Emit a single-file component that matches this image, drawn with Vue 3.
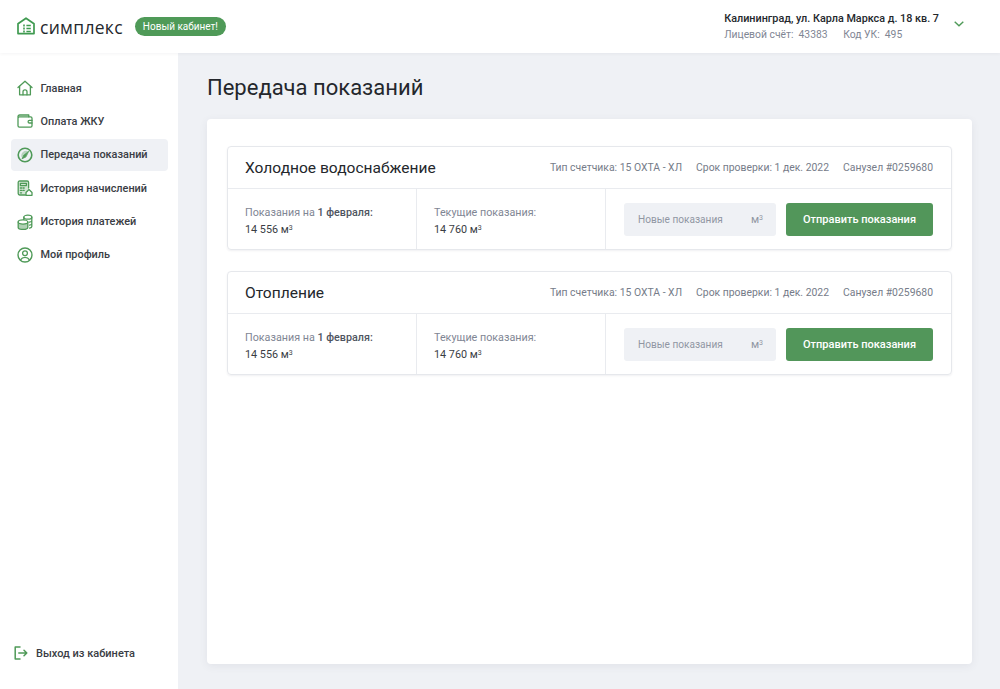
<template>
  <div class="page">
    <header class="topbar">
      <div class="logo">
        <svg class="logo-icon" width="18" height="18" viewBox="0 0 18 18" fill="none" stroke="#3f9a50" stroke-width="1.7">
          <path d="M1 6.8 9 1.2l8 5.6v9.800H1z" stroke-linejoin="round" />
          <path d="M7 7.6v1.8M7 10.600v1.800M7 13.600v1.800" stroke-width="1.6" />
          <path d="M9.4 8.500h4.400M9.4 11.500h4.400M9.4 14.500h4.400" stroke-width="1.6" />
        </svg>
        <span class="logo-text">симплекс</span>
        <span class="badge">Новый кабинет!</span>
      </div>
      <div class="account">
        <div class="account-info">
          <div class="address">Калининград, ул. Карла Маркса д. 18 кв. 7</div>
          <div class="account-meta">
            <span>Лицевой счёт:&nbsp; 43383</span>
            <span>Код УК:&nbsp; 495</span>
          </div>
        </div>
        <svg class="chevron" width="10" height="6" viewBox="0 0 10 6" fill="none" stroke="#4f9a58" stroke-width="1.4">
          <path d="M.7.8 5 4.8 9.3.8" />
        </svg>
      </div>
    </header>

    <div class="body">
      <aside class="sidebar">
        <nav class="menu">
          <a v-for="item in menu" :key="item.title" class="menu-item" :class="{ active: item.active }">
            <svg class="menu-icon" width="16" height="16" viewBox="0 0 16 16" fill="none" stroke="#4f9a58" stroke-width="1.3" stroke-linejoin="round" stroke-linecap="round">
              <template v-if="item.icon === 'home'">
                <path d="M1 7.6 8 1.2l7 6.4" />
                <path d="M2.6 6.4V14.8h10.800V6.400" />
                <path d="M6 14.800v-3a2 2 0 0 1 4 0v3" />
              </template>
              <template v-else-if="item.icon === 'wallet'">
                <path d="M1 4c0-1.300.7-2 1.700-2h9.100v1.800" />
                <rect x="1" y="3.8" width="14" height="10.4" rx="1.4" />
                <path d="M15 7.400h-2.600a1.300 1.300 0 0 0 0 2.600H15" />
              </template>
              <template v-else-if="item.icon === 'gauge'">
                <circle cx="8" cy="8" r="6.8" stroke-width="1.6" />
                <path d="M11.400 4.200a5 5 0 0 0-6.800 6.200z" fill="#4f9a58" fill-opacity=".35" stroke="none" />
                <path d="M11.400 4.600 6.800 8.200 5 11.800l3.600-1.700z" fill="#4f9a58" stroke-width=".8" />
              </template>
              <template v-else-if="item.icon === 'calc'">
                <path d="M8.400 15H2.600a1.400 1.400 0 0 1-1.400-1.400V2.400A1.400 1.400 0 0 1 2.600 1h7.600a1.400 1.400 0 0 1 1.400 1.400V8" fill="#4f9a58" fill-opacity=".25" />
                <path d="M3.400 3.300h6v2.300h-6zM3.400 8h1.200M6 8h1.200M3.400 10.400h1.200M6 10.400h1.200M3.400 12.800h1.200" />
                <path d="M9 12.400 12 9.600l3 2.800v2.900H9z" fill="#fff" />
              </template>
              <template v-else-if="item.icon === 'coins'">
                <ellipse cx="10.8" cy="3.2" rx="4" ry="2" />
                <path d="M6.800 3.200v3M14.800 3.200v9.200c0 .8-1 1.400-2.200 1.700M14.800 6.400c0 .8-1 1.500-2.400 1.800M14.800 9.400c0 .8-1 1.500-2.200 1.700" />
                <path d="M1.200 8v5.400c0 1.100 2.100 2 4.800 2s4.800-.9 4.800-2V8" fill="#4f9a58" fill-opacity=".45" />
                <ellipse cx="6" cy="8" rx="4.8" ry="2.1" fill="#fff" />
              </template>
              <template v-else>
                <circle cx="8" cy="8" r="7" stroke-width="1.4" />
                <circle cx="8" cy="6.2" r="2.4" />
                <path d="M3.800 12.600c.7-1.400 2.300-2.200 4.200-2.200s3.500.8 4.200 2.200" />
              </template>
            </svg>
            <span>{{ item.title }}</span>
          </a>
        </nav>
        <a class="logout">
          <svg width="14" height="14" viewBox="0 0 14 14" fill="none" stroke="#4f9a58" stroke-width="1.5" stroke-linecap="round" stroke-linejoin="round">
            <path d="M6 1H1.200v12H6" />
            <path d="M4.800 7h8M10 4.200 12.800 7 10 9.800" />
          </svg>
          <span>Выход из кабинета</span>
        </a>
      </aside>

      <main class="content">
        <h1 class="page-title">Передача показаний</h1>
        <section class="panel">
          <article v-for="meter in meters" :key="meter.title" class="meter">
            <div class="meter-head">
              <h2 class="meter-title">{{ meter.title }}</h2>
              <div class="meter-specs">
                <span>Тип счетчика: 15 ОХТА - ХЛ</span>
                <span>Срок проверки: 1 дек. 2022</span>
                <span>Санузел #0259680</span>
              </div>
            </div>
            <div class="meter-row">
              <div class="cell">
                <div class="cell-label">Показания на <b>1 февраля:</b></div>
                <div class="cell-value">14 556 м<sup>3</sup></div>
              </div>
              <div class="cell">
                <div class="cell-label">Текущие показания:</div>
                <div class="cell-value">14 760 м<sup>3</sup></div>
              </div>
              <div class="cell cell-form">
                <label class="field">
                  <input v-model="meter.value" placeholder="Новые показания" />
                  <span class="unit">м<sup>3</sup></span>
                </label>
                <button class="send-btn">Отправить показания</button>
              </div>
            </div>
          </article>
        </section>
      </main>
    </div>
  </div>
</template>

<script setup>
import { ref } from 'vue'

const menu = [
  { title: 'Главная', icon: 'home' },
  { title: 'Оплата ЖКУ', icon: 'wallet' },
  { title: 'Передача показаний', icon: 'gauge', active: true },
  { title: 'История начислений', icon: 'calc' },
  { title: 'История платежей', icon: 'coins' },
  { title: 'Мой профиль', icon: 'user' },
]

const meters = ref([
  { title: 'Холодное водоснабжение', value: '' },
  { title: 'Отопление', value: '' },
])
</script>

<style>
html, body { margin: 0; background: #eff1f5; }
</style>

<style scoped>
.page {
  height: 689px;
  display: flex;
  flex-direction: column;
  overflow: hidden;
  background: #eff1f5;
  color: #24272c;
  font-family: Roboto, "Noto Sans", sans-serif;
}

.topbar {
  height: 53px;
  flex: none;
  display: flex;
  align-items: center;
  justify-content: space-between;
  padding: 0 36px 0 17px;
  background: #fff;
  box-sizing: border-box;
  box-shadow: 0 1px 3px rgba(60, 70, 90, .06);
  position: relative;
}
.logo { display: flex; align-items: center; }
.logo-icon { margin-top: -2px; }
.logo-text { margin-left: 5px; font-size: 17.5px; font-weight: 500; letter-spacing: .3px; color: #24272c; font-family: "Open Sans", sans-serif; }
.badge {
  margin-left: 12px;
  height: 19px;
  line-height: 19px;
  padding: 0 8px;
  border-radius: 10px;
  background: #4f9a58;
  color: #fff;
  font-size: 10px;
}

.account { display: flex; align-items: center; gap: 15px; }
.address { font-size: 10.8px; font-weight: 500; line-height: 15px; }
.account-meta { display: flex; gap: 15.5px; margin-top: 2px; font-size: 10.35px; line-height: 14px; color: #7f8694; }
.chevron { margin-bottom: 5px; }

.body { flex: 1; display: flex; min-height: 0; }

.sidebar {
  width: 178px;
  flex: none;
  display: flex;
  flex-direction: column;
  justify-content: space-between;
  padding: 19px 10px 29px 11px;
  box-sizing: border-box;
  background: #fff;
}
.menu { display: flex; flex-direction: column; gap: 1.4px; }
.menu-item {
  height: 32px;
  display: flex;
  align-items: center;
  gap: 7.5px;
  padding-left: 6px;
  border-radius: 4px;
  font-size: 10.9px;
  font-weight: 500;
  color: #3a3d44;
}
.menu-item.active { background: #eff1f5; }
.logout {
  display: flex;
  align-items: center;
  gap: 8px;
  padding-left: 3px;
  font-size: 11px;
  font-weight: 500;
  color: #3a3d44;
}

.content { flex: 1; min-width: 0; padding: 21px 28px 25px 29px; display: flex; flex-direction: column; }
.page-title { margin: 0 0 18px; font-size: 22px; line-height: 27px; font-weight: 400; color: #24272c; }

.panel {
  flex: 1;
  padding: 27px 20px;
  border-radius: 4px;
  background: #fff;
  box-shadow: 0 2px 8px rgba(60, 70, 90, .08);
  display: flex;
  flex-direction: column;
  gap: 21px;
}

.meter { border: 1px solid #e6e8ec; border-radius: 4px; box-shadow: 0 1px 2px rgba(60, 70, 90, .08); }
.meter-head {
  height: 41px;
  display: flex;
  align-items: center;
  justify-content: space-between;
  padding: 0 18px 0 17px;
  border-bottom: 1px solid #e9ebef;
}
.meter-title { margin: 0; font-size: 15.55px; font-weight: 400; color: #24272c; }
.meter-specs { display: flex; gap: 14px; font-size: 10.4px; color: #767c89; }

.meter-row { height: 60px; display: flex; }
.cell {
  width: 189px;
  flex: none;
  box-sizing: border-box;
  padding: 16px 0 0 17px;
  border-right: 1px solid #e9ebef;
}
.cell-label { font-size: 10.75px; line-height: 15px; color: #7f8694; }
.cell-label b { font-weight: 500; color: #4e5460; }
.cell-value { margin-top: 2px; font-size: 10.8px; line-height: 15px; color: #3a3d44; }
sup { font-size: 7px; line-height: 0; vertical-align: 3px; }

.cell-form {
  flex: 1;
  width: auto;
  display: flex;
  align-items: center;
  gap: 10px;
  padding: 0 18px;
  border-right: 0;
}
.field {
  width: 152px;
  height: 33px;
  display: flex;
  align-items: center;
  padding: 0 13px 0 14px;
  box-sizing: border-box;
  border-radius: 3px;
  background: #eff1f5;
}
.field input {
  flex: 1;
  min-width: 0;
  border: 0;
  padding: 0;
  outline: none;
  background: transparent;
  font: inherit;
  font-size: 10.1px;
  color: #3a3d44;
}
.field input::placeholder { color: #9096a3; opacity: 1; }
.unit { font-size: 11px; color: #9096a3; }
.send-btn {
  width: 147px;
  height: 33px;
  border: 0;
  border-radius: 3px;
  background: #52965a;
  color: #fff;
  font: inherit;
  font-size: 11px;
  font-weight: 500;
}
</style>
